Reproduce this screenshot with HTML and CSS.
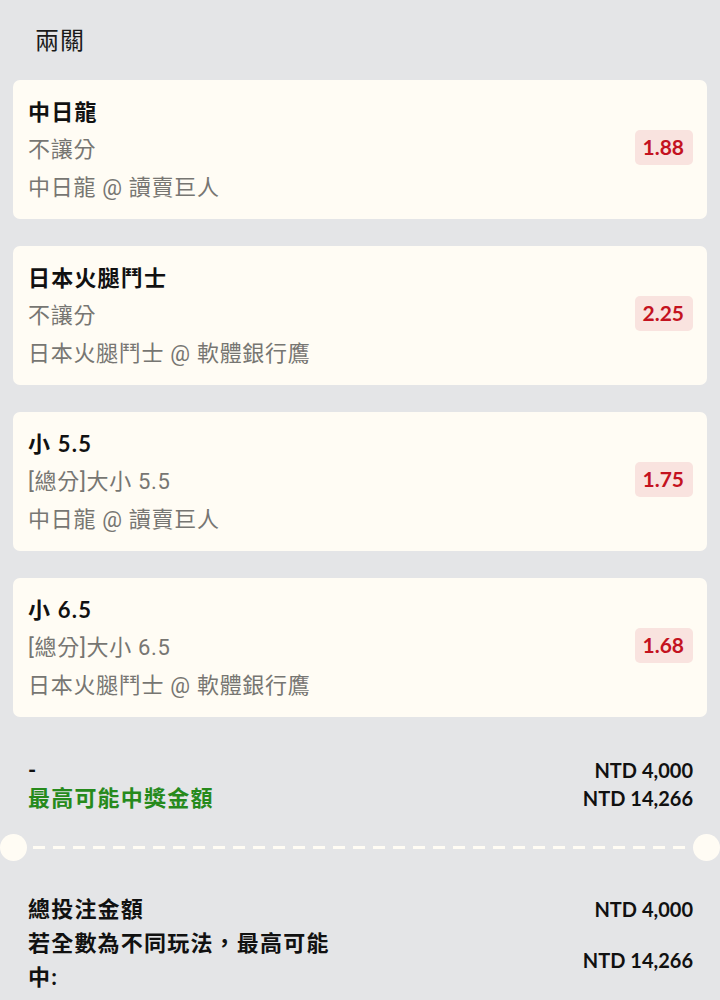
FILE: index.html
```html
<!DOCTYPE html>
<html lang="zh-Hant">
<head>
<meta charset="utf-8">
<link rel="stylesheet" href="styles.css">
</head>
<body>
<div class="page">
  <h1 class="title">兩關</h1>
  <div class="cards">
    <div class="card">
      <div class="info">
        <div class="pick">中日龍</div>
        <div class="sub">不讓分</div>
        <div class="sub">中日龍 @ 讀賣巨人</div>
      </div>
      <div class="odds">1.88</div>
    </div>
    <div class="card">
      <div class="info">
        <div class="pick">日本火腿鬥士</div>
        <div class="sub">不讓分</div>
        <div class="sub">日本火腿鬥士 @ 軟體銀行鷹</div>
      </div>
      <div class="odds">2.25</div>
    </div>
    <div class="card">
      <div class="info">
        <div class="pick">小 5.5</div>
        <div class="sub">[總分]大小 5.5</div>
        <div class="sub">中日龍 @ 讀賣巨人</div>
      </div>
      <div class="odds">1.75</div>
    </div>
    <div class="card">
      <div class="info">
        <div class="pick">小 6.5</div>
        <div class="sub">[總分]大小 6.5</div>
        <div class="sub">日本火腿鬥士 @ 軟體銀行鷹</div>
      </div>
      <div class="odds">1.68</div>
    </div>
  </div>

  <div class="summary">
    <div class="row">
      <div class="label">-</div>
      <div class="value">NTD 4,000</div>
    </div>
    <div class="row">
      <div class="label green">最高可能中獎金額</div>
      <div class="value">NTD 14,266</div>
    </div>
  </div>

  <div class="divider">
    <span class="notch"></span>
    <span class="dash"></span>
    <span class="notch"></span>
  </div>

  <div class="totals">
    <div class="trow">
      <div class="tlabel">總投注金額</div>
      <div class="value">NTD 4,000</div>
    </div>
    <div class="trow">
      <div class="tlabel">若全數為不同玩法，最高可能中:</div>
      <div class="value">NTD 14,266</div>
    </div>
  </div>
</div>
</body>
</html>
```

FILE: styles.css
```css
html, body {
  margin: 0;
  padding: 0;
}
body {
  background: #e4e5e7;
  font-family: Lato, "Noto Sans CJK TC", sans-serif;
  color: #111;
  width: 720px;
  height: 1000px;
  overflow: hidden;
}
.page {
  display: flex;
  flex-direction: column;
}
.title {
  margin: 0;
  padding: 24px 0 0 35px;
  font-size: 24px;
  letter-spacing: 1px;
  font-weight: 400;
  line-height: 32px;
  height: 56px;
  color: #1a1a1a;
}
.cards {
  display: flex;
  flex-direction: column;
  gap: 27px;
  padding: 0 13px;
}
.card {
  background: #fffcf4;
  border-radius: 7px;
  padding: 13px 14px 12px 15px;
  display: flex;
  align-items: center;
  justify-content: space-between;
}
.info {
  display: flex;
  flex-direction: column;
}
.pick {
  font-size: 22px;
  letter-spacing: 1.2px;
  font-weight: 700;
  line-height: 38px;
  color: #111;
}
.sub {
  font-family: Roboto, "Noto Sans CJK TC", sans-serif;
  font-size: 22px;
  letter-spacing: 0.7px;
  line-height: 38px;
  color: #777672;
}
.odds {
  background: #f9e3df;
  color: #c4131f;
  font-size: 21px;
  font-weight: 700;
  padding: 3px 9px 4px 7px;
  line-height: 28px;
  border-radius: 5px;
  margin-bottom: 6px;
}
.summary {
  margin-top: 39px;
  padding: 0 27px 0 28px;
  display: flex;
  flex-direction: column;
}
.row {
  display: flex;
  justify-content: space-between;
  align-items: center;
  line-height: 28px;
}
.label {
  font-size: 22px;
  letter-spacing: 1.2px;
  font-weight: 700;
}
.green {
  color: #268a1c;
}
.value {
  font-size: 20px;
  font-weight: 700;
  color: #111;
}
.divider {
  margin-top: 22px;
  display: flex;
  align-items: center;
  height: 27px;
}
.notch {
  width: 27px;
  height: 27px;
  border-radius: 50%;
  background: #fffcf4;
  flex: none;
}
.dash {
  flex: 1;
  height: 3px;
  margin: 0 6px;
  background-image: linear-gradient(to right, #fffcf4 0 12px, transparent 12px 20px);
  background-size: 20px 3px;
  background-repeat: repeat-x;
}
.totals {
  margin-top: 31px;
  padding: 0 27px 0 28px;
  display: flex;
  flex-direction: column;
}
.trow {
  display: flex;
  justify-content: space-between;
  align-items: center;
}
.tlabel {
  width: 320px;
  font-size: 22px;
  letter-spacing: 1.2px;
  font-weight: 700;
  line-height: 34px;
}
```
